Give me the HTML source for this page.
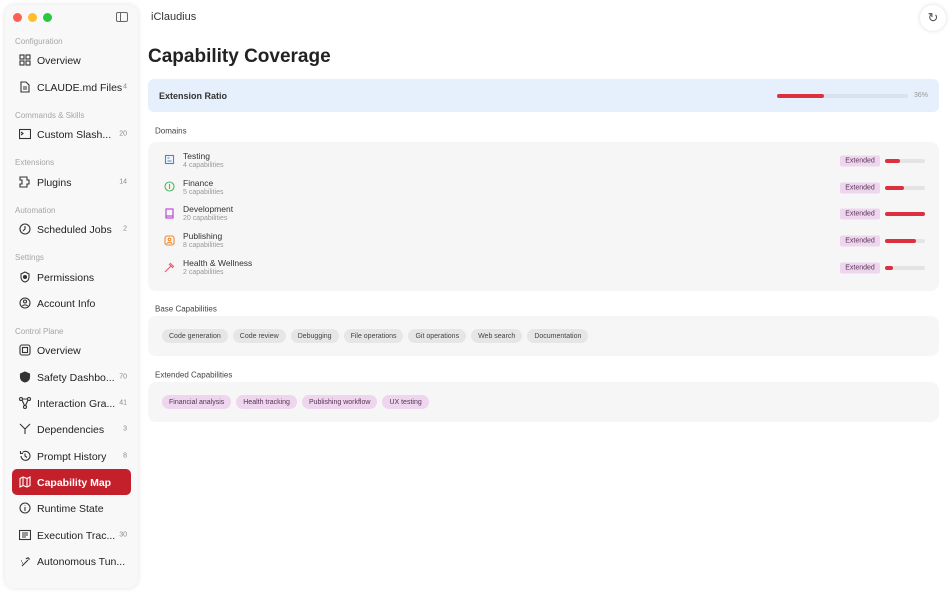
<!DOCTYPE html>
<html><head><meta charset="utf-8"><style>
*{margin:0;padding:0;box-sizing:border-box}
body{width:950px;height:594px;background:#fff;font-family:"Liberation Sans",sans-serif;position:relative;overflow:hidden;color:#222}
.a{position:absolute;white-space:nowrap}
.sb{position:absolute;left:5px;top:5px;width:133px;height:583px;background:#f8f8f8;border-radius:10px;box-shadow:0 0 6px rgba(0,0,0,.12)}
.sh{position:absolute;left:15px;font-size:8px;color:#a6a6a6}
.it{position:absolute;left:37px;font-size:10.5px;color:#222;transform:translateY(-50%);margin-top:1px}
.ct{position:absolute;right:823px;font-size:7px;color:#888;transform:translateY(-50%);z-index:2}
.lbl{position:absolute;left:155px;font-size:8px;color:#444;transform:translateY(-50%)}
.pn{position:absolute;left:148px;width:791px;background:#f6f6f6;border-radius:8px}
.row{position:absolute;left:162px;display:flex;gap:5px}
.chip{display:flex;align-items:center;height:14px;font-size:7px;padding:0 7px;border-radius:7px;background:#e6e6e6;color:#444}
.ext{background:#efd6ef;color:#553355}
.badge{position:absolute;left:840px;width:40px;height:11px;background:#efd6ef;border-radius:2px;font-size:7px;line-height:11px;text-align:center;color:#553355;transform:translateY(-50%)}
.bar{position:absolute;left:885px;width:40px;height:4px;background:#e4e4e4;border-radius:2px;transform:translateY(-50%)}
.bar i{display:block;height:4px;background:#dc3040;border-radius:2px}
.dt{position:absolute;left:183px;font-size:8.5px;color:#333}
.ds{position:absolute;left:183px;font-size:7px;color:#999}
</style></head><body>
<div class="sb"></div>
<div class="a" style="left:13px;top:13px;width:9px;height:9px;border-radius:50%;background:#fe5f57"></div>
<div class="a" style="left:28px;top:13px;width:9px;height:9px;border-radius:50%;background:#febc2e"></div>
<div class="a" style="left:43px;top:13px;width:9px;height:9px;border-radius:50%;background:#28c840"></div>
<div class="a" style="left:116px;top:12px;width:12px;height:10px;border:1.2px solid #666;border-radius:2px"><div style="position:absolute;left:3px;top:0;width:1px;height:100%;background:#666"></div></div>
<div class="a" style="left:151px;top:11px;font-size:11px;color:#333">iClaudius</div>
<div class="a" style="left:920px;top:5px;width:26px;height:26px;border-radius:50%;background:#fff;box-shadow:0 0 4px rgba(0,0,0,.15);text-align:center;line-height:26px;font-size:13px;color:#555">↻</div>

<div class="sh" style="top:37px">Configuration</div>
<div class="sh" style="top:111px">Commands &amp; Skills</div>
<div class="sh" style="top:158px">Extensions</div>
<div class="sh" style="top:206px">Automation</div>
<div class="sh" style="top:253px">Settings</div>
<div class="sh" style="top:327px">Control Plane</div>

<div class="a" style="left:12px;top:469px;width:119px;height:26px;background:#c4202c;border-radius:5px"></div>

<svg class="a" style="left:19px;top:54px" width="12" height="520" fill="none" stroke="#333" stroke-width="1.1">
<g transform="translate(0,0)"><rect x="1" y="1" width="4" height="4"/><rect x="7" y="1" width="4" height="4"/><rect x="1" y="7" width="4" height="4"/><rect x="7" y="7" width="4" height="4"/></g>
<g transform="translate(0,27)"><path d="M2 1h5l3 3v7H2z M4 6h4M4 8h4"/></g>
<g transform="translate(0,74)"><rect x="0.5" y="1.5" width="11" height="9"/><path d="M2 4l2 1.5-2 1.5"/></g>
<g transform="translate(0,122)"><path d="M1 1h7v3h2v4h-2v3H1v-3h2V4H1z"/></g>
<g transform="translate(0,169)"><circle cx="6" cy="6" r="5"/><path d="M6 3v3l-2 2"/></g>
<g transform="translate(0,217)"><path d="M6 1l4 2v3c0 3-2 4.5-4 5-2-.5-4-2-4-5V3z"/><circle cx="6" cy="6" r="1.5" fill="#333"/></g>
<g transform="translate(0,243)"><circle cx="6" cy="6" r="5"/><circle cx="6" cy="4.5" r="1.5"/><path d="M3.5 9c1-1.5 4-1.5 5 0"/></g>
<g transform="translate(0,290)"><rect x="1" y="1" width="10" height="10" rx="2"/><rect x="3.5" y="3.5" width="5" height="5"/></g>
<g transform="translate(0,317)"><path d="M6 1l4.5 2v3c0 3-2.5 4.5-4.5 5-2-.5-4.5-2-4.5-5V3z" fill="#333"/></g>
<g transform="translate(0,343)"><circle cx="2" cy="2" r="1.5"/><circle cx="10" cy="2" r="1.5"/><circle cx="6" cy="10" r="1.5"/><path d="M3 3l2.5 5.5M9 3L6.5 8.5M3.5 2h5"/></g>
<g transform="translate(0,369)"><path d="M1 1l5 5 5-5M6 6v5"/></g>
<g transform="translate(0,396)"><path d="M2 6a4.5 4.5 0 1 0 1.5-3.5M1.5 1v2.5H4M6 3.5V6l2 1.5"/></g>
<g transform="translate(0,422)" stroke="#fff"><path d="M1 2.5l3-1.5 4 1.5 3-1.5v8.5l-3 1.5-4-1.5-3 1.5zM4 1v8.5M8 2.5V11"/></g>
<g transform="translate(0,448)"><circle cx="6" cy="6" r="5"/><path d="M6 5v4M6 3v.5"/></g>
<g transform="translate(0,475)"><rect x="0.5" y="1.5" width="11" height="9"/><path d="M3 4h6M3 6h6M3 8h4"/></g>
<g transform="translate(0,501)"><path d="M3 11l6-6M9 2v2M11 4H9M7 3l1 1M2 6h1M3 8h1"/></g>
</svg>

<div class="it" style="top:60px">Overview</div>
<div class="it" style="top:87px">CLAUDE.md Files</div><div class="ct" style="top:87px">4</div>
<div class="it" style="top:134px">Custom Slash...</div><div class="ct" style="top:134px">20</div>
<div class="it" style="top:182px">Plugins</div><div class="ct" style="top:182px">14</div>
<div class="it" style="top:229px">Scheduled Jobs</div><div class="ct" style="top:229px">2</div>
<div class="it" style="top:277px">Permissions</div>
<div class="it" style="top:303px">Account Info</div>
<div class="it" style="top:350px">Overview</div>
<div class="it" style="top:377px">Safety Dashbo...</div><div class="ct" style="top:377px">70</div>
<div class="it" style="top:403px">Interaction Gra...</div><div class="ct" style="top:403px">41</div>
<div class="it" style="top:429px">Dependencies</div><div class="ct" style="top:429px">3</div>
<div class="it" style="top:456px">Prompt History</div><div class="ct" style="top:456px">8</div>
<div class="it" style="top:482px;color:#fff;font-weight:bold">Capability Map</div>
<div class="it" style="top:508px">Runtime State</div>
<div class="it" style="top:535px">Execution Trac...</div><div class="ct" style="top:535px">30</div>
<div class="it" style="top:561px">Autonomous Tun...</div>

<div class="a" style="left:148px;top:46px;font-size:19px;font-weight:bold;color:#222">Capability Coverage</div>
<div class="a" style="left:148px;top:79px;width:791px;height:33px;background:#e5f0fc;border-radius:6px"></div>
<div class="a" style="left:159px;top:91px;font-size:9px;font-weight:bold;color:#333">Extension Ratio</div>
<div class="a" style="left:777px;top:94px;width:131px;height:4px;background:#d8e2ec;border-radius:2px"><div style="width:47px;height:4px;background:#dc3040;border-radius:2px"></div></div>
<div class="a" style="left:914px;top:92px;font-size:7px;color:#999">36%</div>

<div class="lbl" style="top:131px">Domains</div>
<div class="pn" style="top:142px;height:149px"></div>
<svg class="a" style="left:164px;top:154px" width="12" height="122" fill="none" stroke-width="1.1">
<g stroke="#3b8be0"><rect x="1.5" y="1.5" width="8" height="8"/><path d="M3.5 4h2M3.5 7h4"/></g>
<g transform="translate(0,27)" stroke="#4cbb5a"><circle cx="5.5" cy="5.5" r="4.5"/><path d="M5.5 3v5"/></g>
<g transform="translate(0,54)" stroke="#b43fd0"><rect x="2" y="1" width="7" height="9"/><path d="M2 8h7"/></g>
<g transform="translate(0,81)" stroke="#f08a30"><rect x="1" y="1" width="9" height="9" rx="2"/><circle cx="5.5" cy="4.5" r="1.3"/><path d="M3 9c0-2 5-2 5 0"/></g>
<g transform="translate(0,108)" stroke="#e45a70"><path d="M1 10l6-6M5 2l4 4M6 1l4 4"/></g>
</svg>
<div class="dt" style="top:151px">Testing</div><div class="ds" style="top:162px">4 capabilities</div>
<div class="dt" style="top:178px">Finance</div><div class="ds" style="top:189px">5 capabilities</div>
<div class="dt" style="top:204px">Development</div><div class="ds" style="top:215px">20 capabilities</div>
<div class="dt" style="top:231px">Publishing</div><div class="ds" style="top:242px">8 capabilities</div>
<div class="dt" style="top:258px">Health &amp; Wellness</div><div class="ds" style="top:269px">2 capabilities</div>
<div class="badge" style="top:161px">Extended</div><div class="bar" style="top:161px"><i style="width:15px"></i></div>
<div class="badge" style="top:188px">Extended</div><div class="bar" style="top:188px"><i style="width:19px"></i></div>
<div class="badge" style="top:214px">Extended</div><div class="bar" style="top:214px"><i style="width:40px"></i></div>
<div class="badge" style="top:241px">Extended</div><div class="bar" style="top:241px"><i style="width:31px"></i></div>
<div class="badge" style="top:268px">Extended</div><div class="bar" style="top:268px"><i style="width:8px"></i></div>

<div class="lbl" style="top:309px">Base Capabilities</div>
<div class="pn" style="top:316px;height:40px"></div>
<div class="row" style="top:329px"><span class="chip">Code generation</span><span class="chip">Code review</span><span class="chip">Debugging</span><span class="chip">File operations</span><span class="chip">Git operations</span><span class="chip">Web search</span><span class="chip">Documentation</span></div>

<div class="lbl" style="top:375px">Extended Capabilities</div>
<div class="pn" style="top:382px;height:40px"></div>
<div class="row" style="top:395px"><span class="chip ext">Financial analysis</span><span class="chip ext">Health tracking</span><span class="chip ext">Publishing workflow</span><span class="chip ext">UX testing</span></div>
</body></html>
